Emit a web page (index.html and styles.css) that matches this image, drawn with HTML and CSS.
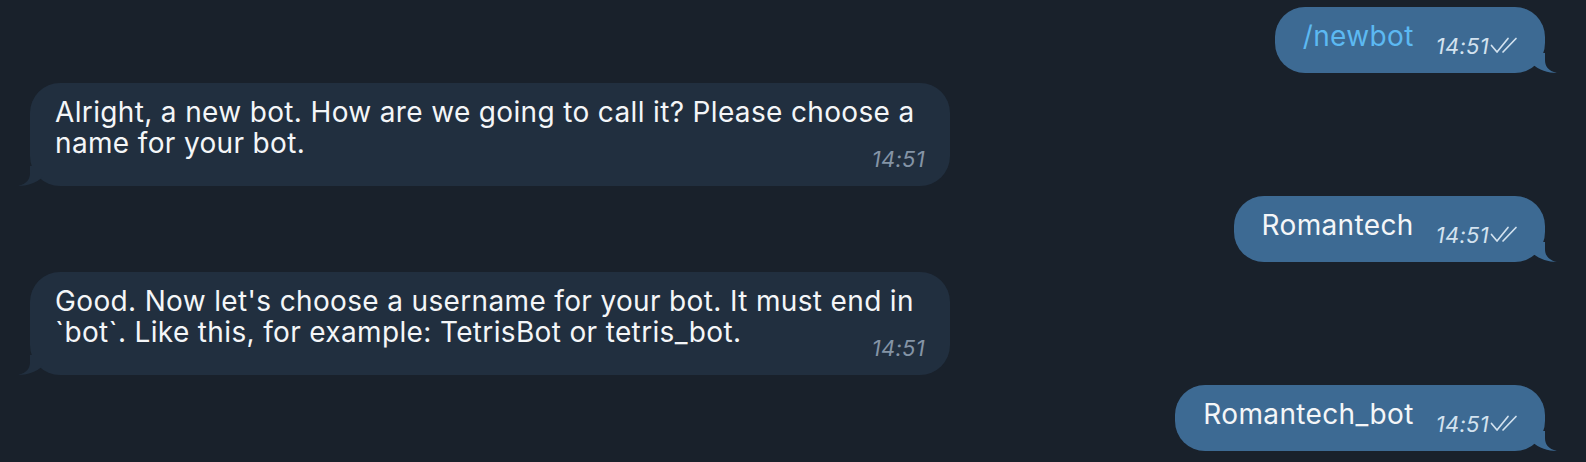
FILE: index.html
```html
<!DOCTYPE html>
<html>
<head>
<meta charset="utf-8">
<link rel="stylesheet" href="styles.css">
</head>
<body>
<div class="chat">
  <div class="row out">
    <div class="bubble out-bubble">
      <span class="text link">/newbot</span>
      <span class="meta">14:51<svg class="checks" viewBox="0 0 28 17" width="28" height="17"><path d="M1.5 8.5 L7 15 L18 1.5 M13 15 L26 1.5" fill="none" stroke="currentColor" stroke-width="1.7" stroke-linecap="round" stroke-linejoin="round"/></svg></span>
      <svg class="tail tail-out" viewBox="0 0 26 20" width="26" height="20"><path d="M13 0 L13 7 C13 13 16 18 25 20 C16 20 7 17 0 11 L0 0 Z"/></svg>
    </div>
  </div>
  <div class="row in">
    <div class="bubble in-bubble">
      <p class="text">Alright, a new bot. How are we going to call it? Please choose a<br>name for your bot.</p>
      <div class="meta">14:51</div>
      <svg class="tail tail-in" viewBox="0 0 26 20" width="26" height="20"><path d="M13 0 L13 7 C13 13 10 18 1 20 C10 20 19 17 26 11 L26 0 Z"/></svg>
    </div>
  </div>
  <div class="row out">
    <div class="bubble out-bubble">
      <span class="text">Romantech</span>
      <span class="meta">14:51<svg class="checks" viewBox="0 0 28 17" width="28" height="17"><path d="M1.5 8.5 L7 15 L18 1.5 M13 15 L26 1.5" fill="none" stroke="currentColor" stroke-width="1.7" stroke-linecap="round" stroke-linejoin="round"/></svg></span>
      <svg class="tail tail-out" viewBox="0 0 26 20" width="26" height="20"><path d="M13 0 L13 7 C13 13 16 18 25 20 C16 20 7 17 0 11 L0 0 Z"/></svg>
    </div>
  </div>
  <div class="row in">
    <div class="bubble in-bubble">
      <p class="text">Good. Now let's choose a username for your bot. It must end in<br>`bot`. Like this, for example: TetrisBot or tetris_bot.</p>
      <div class="meta">14:51</div>
      <svg class="tail tail-in" viewBox="0 0 26 20" width="26" height="20"><path d="M13 0 L13 7 C13 13 10 18 1 20 C10 20 19 17 26 11 L26 0 Z"/></svg>
    </div>
  </div>
  <div class="row out">
    <div class="bubble out-bubble">
      <span class="text">Romantech_bot</span>
      <span class="meta">14:51<svg class="checks" viewBox="0 0 28 17" width="28" height="17"><path d="M1.5 8.5 L7 15 L18 1.5 M13 15 L26 1.5" fill="none" stroke="currentColor" stroke-width="1.7" stroke-linecap="round" stroke-linejoin="round"/></svg></span>
      <svg class="tail tail-out" viewBox="0 0 26 20" width="26" height="20"><path d="M13 0 L13 7 C13 13 16 18 25 20 C16 20 7 17 0 11 L0 0 Z"/></svg>
    </div>
  </div>
</div>
</body>
</html>
```

FILE: styles.css
```css
html, body {
  margin: 0;
  padding: 0;
  background: #19212b;
}
body {
  font-family: Inter, "Noto Sans", "Liberation Sans", sans-serif;
  color: #f4f6f8;
  width: 1586px;
  height: 462px;
  overflow: hidden;
}
.chat {
  display: flex;
  flex-direction: column;
  gap: 10px;
  padding-top: 7px;
}
.row {
  display: flex;
}
.row.out {
  justify-content: flex-end;
  padding-right: 41px;
}
.row.in {
  justify-content: flex-start;
  padding-left: 30px;
}
.bubble {
  position: relative;
  border-radius: 30px;
}
.out-bubble {
  background: #3d6a93;
  display: flex;
  align-items: flex-start;
  padding: 14px 27px 15px 28px;
}
.text {
  font-size: 28px;
  letter-spacing: 0.35px;
}
.out-bubble .text {
  line-height: 30px;
  white-space: nowrap;
}
.text.link {
  color: #5cb9f2;
}
.meta {
  font-size: 22px;
  line-height: 24px;
  font-style: italic;
  letter-spacing: 0.3px;
}
.out-bubble .meta {
  display: flex;
  align-items: flex-start;
  margin-top: 13px;
  margin-left: 22px;
  color: #d3e2ef;
}
.checks {
  margin-left: 1px;
  margin-top: 3px;
  color: #d3e2ef;
}
.in-bubble {
  background: #212f3f;
  width: 920px;
  box-sizing: border-box;
  padding: 14px 25px 15px 25px;
}
.in-bubble .text {
  margin: 0;
  line-height: 31px;
}
.in-bubble .meta {
  text-align: right;
  margin-top: -12px;
  color: #8494a6;
}
.tail {
  position: absolute;
  bottom: 0;
}
.tail-out {
  right: -13px;
  fill: #3d6a93;
}
.tail-in {
  left: -13px;
  fill: #212f3f;
}
```
